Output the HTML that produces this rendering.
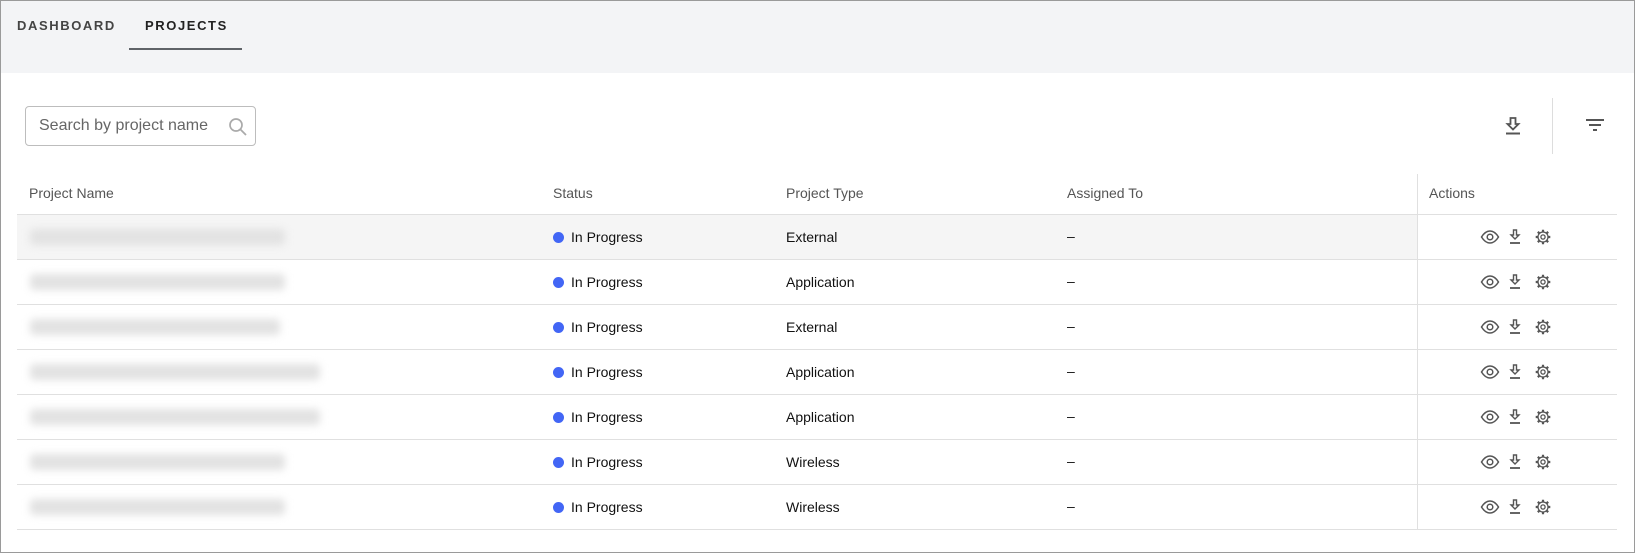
<!DOCTYPE html>
<html><head><style>
*{box-sizing:border-box;margin:0;padding:0}
body{width:1635px;height:553px;background:#fff;font-family:"Liberation Sans",Arial,sans-serif;position:relative;overflow:hidden}
.frame{position:absolute;left:0;top:0;width:1635px;height:553px;border:1px solid #9a9a9a}
.bar{position:absolute;left:1px;top:1px;width:1633px;height:72px;background:#f3f4f6}
.tab{position:absolute;top:18px;font-size:13px;letter-spacing:1.6px;font-weight:bold}
.ul{position:absolute;left:129px;top:48px;width:113px;height:2px;background:#5f6368}
.search{position:absolute;left:25px;top:106px;width:231px;height:40px;border:1px solid #bdbdbd;border-radius:4px;font-size:16px;color:#666;padding:10px 0 0 13px}
.col{position:absolute;font-size:14px}
.hd{color:#555;top:185px}
.hl{position:absolute;left:17px;width:1600px;height:1px;background:#e0e0e0}
.dot{position:absolute;left:553px;width:11px;height:11px;border-radius:50%;background:#4266f5}
.blur{position:absolute;left:30px;height:16px;background:#e2e2e2;filter:blur(4px);border-radius:4px}
</style></head><body>
<div class="bar"></div>
<div class="tab" style="left:17px;color:#444">DASHBOARD</div>
<div class="tab" style="left:145px;color:#222">PROJECTS</div>
<div class="ul"></div>
<div class="search">Search by project name
<svg style="position:absolute;left:202px;top:10px" width="20" height="20" viewBox="0 0 20 20"><circle cx="8" cy="8" r="6" fill="none" stroke="#aaa" stroke-width="1.7"/><path d="M12.5 12.5L18 18" stroke="#aaa" stroke-width="1.8"/></svg></div>
<svg style="position:absolute;left:1505px;top:117px" width="16" height="18" viewBox="0 0 16 18"><path d="M5.5 1h5v6h3l-5.5 5.5L2.5 7h3z" fill="none" stroke="#555" stroke-width="1.8"/><path d="M1 16.5h14" stroke="#555" stroke-width="2"/></svg>
<div style="position:absolute;left:1552px;top:98px;width:1px;height:56px;background:#ddd"></div>
<svg style="position:absolute;left:1585px;top:118px" width="20" height="16" viewBox="0 0 20 16"><path d="M1 2h18M4 7h12M8 12h4" stroke="#555" stroke-width="2"/></svg>
<div style="position:absolute;left:1417px;top:174px;width:1px;height:355px;background:#e0e0e0"></div>
<div class="col hd" style="left:29px">Project Name</div>
<div class="col hd" style="left:553px">Status</div>
<div class="col hd" style="left:786px">Project Type</div>
<div class="col hd" style="left:1067px">Assigned To</div>
<div class="col hd" style="left:1429px">Actions</div>
<div class="hl" style="top:214px"></div>
<div style="position:absolute;left:17px;top:215px;width:1400px;height:44px;background:#f5f5f5"></div>
<div id="rows"></div>
<script>
var types=["External","Application","External","Application","Application","Wireless","Wireless"];
var w=[255,255,250,290,290,255,255];
var teeth="";for(var k=0;k<8;k++){var a=k*Math.PI/4;teeth+='M'+(63+5*Math.cos(a)).toFixed(2)+' '+(9+5*Math.sin(a)).toFixed(2)+'L'+(63+7.3*Math.cos(a)).toFixed(2)+' '+(9+7.3*Math.sin(a)).toFixed(2);}
var h="";
for(var i=0;i<7;i++){var t=214+45*i;
h+='<div class="blur" style="top:'+(t+15)+'px;width:'+w[i]+'px"></div>';
h+='<div class="dot" style="top:'+(t+18)+'px"></div>';
h+='<div class="col" style="left:571px;top:'+(t+15)+'px;color:#111">In Progress</div>';
h+='<div class="col" style="left:786px;top:'+(t+15)+'px;color:#111">'+types[i]+'</div>';
h+='<div class="col" style="left:1067px;top:'+(t+14)+'px;color:#111">–</div>';
h+='<svg style="position:absolute;left:1480px;top:'+(t+14)+'px" width="80" height="18" viewBox="0 0 80 18"><path d="M1.5 9C4 5 7 3 10 3s6 2 8.5 6c-2.5 4-5.5 6-8.5 6S4 13 1.5 9z" fill="none" stroke="#555" stroke-width="1.5"/><circle cx="10" cy="9" r="2.8" fill="none" stroke="#555" stroke-width="1.5"/><path d="M33.5 2h3v5h2.5l-4 4-4-4h2.5z" fill="none" stroke="#555" stroke-width="1.4"/><path d="M30 15h10" stroke="#555" stroke-width="1.8"/><circle cx="63" cy="9" r="5" fill="none" stroke="#555" stroke-width="1.3"/><circle cx="63" cy="9" r="2.1" fill="none" stroke="#555" stroke-width="1.3"/><path d="'+teeth+'" stroke="#555" stroke-width="2.2"/></svg>';
h+='<div class="hl" style="top:'+(t+45)+'px"></div>';}
document.getElementById("rows").innerHTML=h;
</script>
<div class="frame"></div>
</body></html>
